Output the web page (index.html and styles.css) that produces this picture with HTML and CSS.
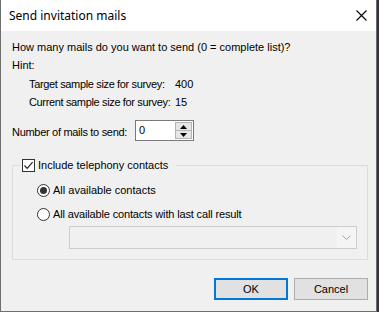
FILE: index.html
```html
<!DOCTYPE html>
<html>
<head>
<meta charset="utf-8">
<link rel="stylesheet" href="styles.css">
</head>
<body>
<div class="window">
  <div class="titlebar">
    <span class="title">Send invitation mails</span>
    <svg class="close" width="11" height="11" viewBox="0 0 11 11"><path d="M0.5 0.5 L10.5 10.5 M10.5 0.5 L0.5 10.5" stroke="#000" stroke-width="1.1" fill="none"/></svg>
  </div>
  <div class="body">
    <div class="line">How many mails do you want to send (0 = complete list)?</div>
    <div class="line hint">Hint:</div>
    <div class="hint-row first"><span class="hint-label">Target sample size for survey:</span><span>400</span></div>
    <div class="hint-row"><span class="hint-label">Current sample size for survey:</span><span>15</span></div>
    <div class="num-row">
      <span class="num-label">Number of mails to send:</span>
      <div class="spin">
        <span class="spin-value">0</span>
        <div class="spin-btns">
          <span class="spin-btn"><svg width="7" height="4" viewBox="0 0 7 4"><path d="M3.5 0 L7 4 L0 4 Z" fill="#000"/></svg></span>
          <span class="spin-btn"><svg width="7" height="4" viewBox="0 0 7 4"><path d="M0 0 L7 0 L3.5 4 Z" fill="#000"/></svg></span>
        </div>
      </div>
    </div>
    <fieldset class="group">
      <legend class="group-legend"><span class="checkbox"><svg width="11" height="11" viewBox="0 0 11 11"><path d="M1.5 5.5 L4.2 8.3 L9.6 2.2" stroke="#222" stroke-width="1.2" fill="none"/></svg></span>Include telephony contacts</legend>
      <div class="group-inner">
        <div class="radio-row"><span class="radio checked"></span>All available contacts</div>
        <div class="radio-row second"><span class="radio"></span>All available contacts with last call result</div>
        <div class="combo"><span class="combo-arrow"><svg width="9" height="5" viewBox="0 0 9 5"><path d="M0.5 0.5 L4.5 4.5 L8.5 0.5" stroke="#a0a0a0" stroke-width="1" fill="none"/></svg></span></div>
      </div>
    </fieldset>
    <div class="buttons">
      <button class="btn btn-default">OK</button>
      <button class="btn">Cancel</button>
    </div>
  </div>
</div>
</body>
</html>
```
FILE: styles.css
```css
html, body {
  margin: 0;
  padding: 0;
  background: #3b2b38;
}
body {
  width: 379px;
  height: 312px;
  overflow: hidden;
}
.window {
  width: 377px;
  height: 312px;
  box-sizing: border-box;
  border: 1px solid #6e6e6e;
  border-top: none;
  background: #f0f0f0;
  display: flex;
  flex-direction: column;
  font-family: "Liberation Sans", Arial, sans-serif;
  font-size: 11px;
  line-height: 13px;
  color: #000;
}
.titlebar {
  height: 31px;
  flex: 0 0 31px;
  background: #fff;
  display: flex;
  align-items: center;
  justify-content: space-between;
  padding: 0 9px 0 8px;
}
.title {
  font-family: "Noto Sans", "Open Sans", sans-serif;
  font-size: 12px;
  color: #000;
  margin-top: -1px;
}
.close {
  display: block;
  margin-top: -1px;
}
.body {
  padding: 10px 8px 0 11px;
  display: flex;
  flex-direction: column;
}
.line {
  height: 13px;
  white-space: nowrap;
}
.hint {
  margin-top: 5px;
}
.hint-row {
  display: flex;
  height: 13px;
  padding-left: 17px;
  margin-top: 5px;
  white-space: nowrap;
}
.hint-row.first {
  margin-top: 6px;
}
.hint-label {
  width: 146px;
  flex-shrink: 0;
  letter-spacing: -0.35px;
}
.num-row {
  display: flex;
  align-items: center;
  margin-top: 11px;
  height: 21px;
  white-space: nowrap;
}
.num-label {
  width: 123px;
  flex-shrink: 0;
  padding-top: 3px;
  letter-spacing: -0.3px;
}
.spin {
  width: 59px;
  height: 21px;
  flex-shrink: 0;
  box-sizing: border-box;
  border: 1px solid #7a7a7a;
  background: #fff;
  display: flex;
  justify-content: space-between;
}
.spin-value {
  padding: 3px 0 0 3px;
}
.spin-btns {
  width: 17px;
  display: flex;
  flex-direction: column;
  padding: 1px 1px 1px 0;
}
.spin-btn {
  flex: 1;
  background: #e6e6e6;
  border: 1px solid #b4b4b4;
  display: flex;
  align-items: center;
  justify-content: center;
}
.spin-btn + .spin-btn {
  border-top: none;
}
.spin-btn svg {
  display: block;
}
.group {
  margin: 18px 0 0 0;
  width: 356px;
  box-sizing: border-box;
  border: 1px solid #dcdcdc;
  padding: 0;
  min-width: 0;
}
.group-legend {
  margin-left: 7px;
  padding: 0 8px 0 2px;
  display: flex;
  align-items: center;
  height: 13px;
  white-space: nowrap;
}
.group-inner {
  padding: 12px 0 10px 24px;
}
.checkbox {
  width: 13px;
  height: 13px;
  box-sizing: border-box;
  border: 1px solid #333;
  background: #fff;
  margin-right: 3px;
  display: flex;
  align-items: center;
  justify-content: center;
}
.checkbox svg {
  display: block;
}
.radio-row {
  display: flex;
  align-items: center;
  height: 13px;
  white-space: nowrap;
}
.radio-row.second {
  margin-top: 11px;
  letter-spacing: -0.15px;
}
.radio {
  width: 13px;
  height: 13px;
  flex-shrink: 0;
  box-sizing: border-box;
  border: 1px solid #333;
  border-radius: 50%;
  background: #fff;
  margin-right: 3px;
  display: flex;
  align-items: center;
  justify-content: center;
}
.radio.checked::after {
  content: "";
  width: 7px;
  height: 7px;
  border-radius: 50%;
  background: #333;
}
.combo {
  margin: 5px 0 0 32px;
  width: 288px;
  height: 23px;
  box-sizing: border-box;
  border: 1px solid #cccccc;
  background: #f0f0f0;
  display: flex;
  justify-content: flex-end;
}
.combo-arrow {
  width: 19px;
  background: #f4f4f4;
  display: flex;
  align-items: center;
  justify-content: center;
}
.combo-arrow svg {
  display: block;
}
.buttons {
  display: flex;
  justify-content: flex-end;
  gap: 6px;
  margin-top: 18px;
  padding-right: 0;
}
.btn {
  width: 74px;
  height: 22px;
  box-sizing: border-box;
  margin: 0;
  padding: 0;
  background: #e1e1e1;
  border: 1px solid #adadad;
  font-family: "Liberation Sans", Arial, sans-serif;
  font-size: 11px;
  color: #000;
}
.btn-default {
  border: 2px solid #0078d7;
}
```
